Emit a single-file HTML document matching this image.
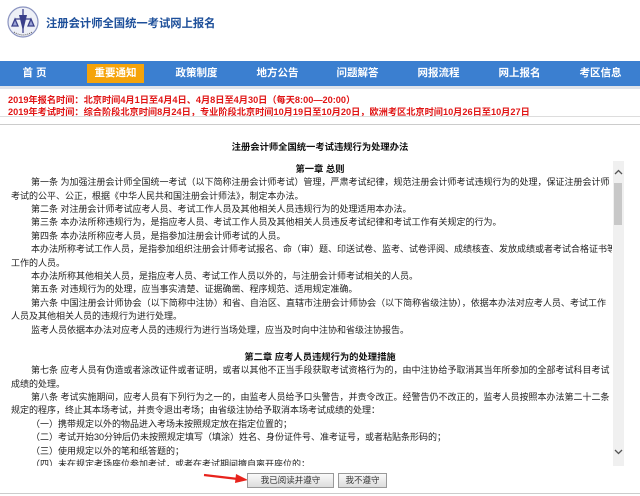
<!DOCTYPE html>
<html><head><meta charset="utf-8"><style>
*{margin:0;padding:0;box-sizing:border-box}
body{width:640px;height:496px;overflow:hidden;background:#fff;font-family:"Liberation Sans","Noto Sans CJK SC",sans-serif;position:relative}
.logo{position:absolute;left:6px;top:5px;width:34px;height:34px}
.site{position:absolute;left:46px;top:15px;font-size:11.3px;font-weight:bold;color:#1d4f9a}
.nav{position:absolute;left:0;top:61px;width:640px;height:25px;background:#3b7fd0}
.nav span{position:absolute;top:0;width:81px;text-align:center;line-height:25px;color:#fff;font-size:10.5px;font-weight:bold}
.hl{position:absolute;left:87px;top:64px;width:57px;height:19px;background:#f5a30a}
.gl{position:absolute;left:0;top:86px;width:640px;height:3px;background:#dfe3ea}
.red{position:absolute;left:8px;font-size:9.2px;font-weight:bold;color:#e01515;white-space:nowrap}
.sep{position:absolute;left:0;width:640px;height:1px;background:#ccc}
.title{position:absolute;left:0;width:640px;text-align:center;top:139px;font-size:9.3px;font-weight:bold;color:#111}
.box{position:absolute;left:0;top:161px;width:612px;height:305px;overflow:hidden}
.ln{position:absolute;left:11px;width:595px;font-size:9px;color:#222;white-space:nowrap;line-height:13px;height:13px}
.in{left:31px;width:575px}
.j{text-align:justify;text-align-last:justify}
.h{left:0;width:640px;text-align:center;font-weight:bold;color:#111;font-size:9.3px}
.sb{position:absolute;left:613px;top:161px;width:11px;height:305px;background:#f0f0f0}
.th{position:absolute;left:614px;top:183px;width:8px;height:42px;background:#c8c8c8}
.btn{position:absolute;top:473px;height:15px;border:1px solid #999;background:linear-gradient(#fafafa,#dcdcdc);font-size:8.5px;color:#333;text-align:center;line-height:13px}
</style></head><body>
<svg class="logo" viewBox="0 0 34 34"><circle cx="17" cy="17" r="15" fill="#eef0f7" stroke="#8a93c0" stroke-width="1.2"/><path d="M17 4 L17 28 M9 14 L25 14 M9 14 L6 21 L12 21 Z M25 14 L22 21 L28 21 Z" stroke="#3a3f8a" stroke-width="1.3" fill="#9aa3d6"/><path d="M13 10 L17 26 L21 10 Z" fill="#3a3f8a"/><path d="M8 27 Q17 33 26 27" stroke="#555" stroke-width="1" fill="none" stroke-dasharray="1 1"/></svg>
<div class="site">注册会计师全国统一考试网上报名</div>
<div class="nav">
<span style="left:-6px">首 页</span><span style="left:156px">政策制度</span><span style="left:237px">地方公告</span><span style="left:317px">问题解答</span><span style="left:398px">网报流程</span><span style="left:479px">网上报名</span><span style="left:560px">考区信息</span>
</div>
<div class="hl"></div>
<div class="nav" style="background:none"><span style="left:75px">重要通知</span></div>
<div class="gl"></div>
<div class="red" style="top:92px">2019年报名时间：北京时间4月1日至4月4日、4月8日至4月30日（每天8:00—20:00）</div>
<div class="red" style="top:104px">2019年考试时间：综合阶段北京时间8月24日，专业阶段北京时间10月19日至10月20日，欧洲考区北京时间10月26日至10月27日</div>
<div class="sep" style="top:116px;background:#ddd"></div>
<div class="sep" style="top:124px"></div>
<div class="title">注册会计师全国统一考试违规行为处理办法</div>
<div class="box">
<div class="ln h" style="top:2px">第一章 总则</div>
<div class="ln in j" style="top:15px">第一条 为加强注册会计师全国统一考试（以下简称注册会计师考试）管理，严肃考试纪律，规范注册会计师考试违规行为的处理，保证注册会计师</div>
<div class="ln" style="top:29px">考试的公平、公正，根据《中华人民共和国注册会计师法》，制定本办法。</div>
<div class="ln in" style="top:42px">第二条 对注册会计师考试应考人员、考试工作人员及其他相关人员违规行为的处理适用本办法。</div>
<div class="ln in" style="top:55px">第三条 本办法所称违规行为，是指应考人员、考试工作人员及其他相关人员违反考试纪律和考试工作有关规定的行为。</div>
<div class="ln in" style="top:69px">第四条 本办法所称应考人员，是指参加注册会计师考试的人员。</div>
<div class="ln in j" style="top:82px;width:582px">本办法所称考试工作人员，是指参加组织注册会计师考试报名、命（审）题、印送试卷、监考、试卷评阅、成绩核查、发放成绩或者考试合格证书等</div>
<div class="ln" style="top:96px">工作的人员。</div>
<div class="ln in" style="top:109px">本办法所称其他相关人员，是指应考人员、考试工作人员以外的，与注册会计师考试相关的人员。</div>
<div class="ln in" style="top:122px">第五条 对违规行为的处理，应当事实清楚、证据确凿、程序规范、适用规定准确。</div>
<div class="ln in j" style="top:136px">第六条 中国注册会计师协会（以下简称中注协）和省、自治区、直辖市注册会计师协会（以下简称省级注协），依据本办法对应考人员、考试工作</div>
<div class="ln" style="top:149px">人员及其他相关人员的违规行为进行处理。</div>
<div class="ln in" style="top:163px">监考人员依据本办法对应考人员的违规行为进行当场处理，应当及时向中注协和省级注协报告。</div>
<div class="ln h" style="top:190px">第二章 应考人员违规行为的处理措施</div>
<div class="ln in j" style="top:203px">第七条 应考人员有伪造或者涂改证件或者证明，或者以其他不正当手段获取考试资格行为的，由中注协给予取消其当年所参加的全部考试科目考试</div>
<div class="ln" style="top:217px">成绩的处理。</div>
<div class="ln in j" style="top:230px">第八条 考试实施期间，应考人员有下列行为之一的，由监考人员给予口头警告，并责令改正。经警告仍不改正的，监考人员按照本办法第二十二条</div>
<div class="ln" style="top:243px">规定的程序，终止其本场考试，并责令退出考场；由省级注协给予取消本场考试成绩的处理：</div>
<div class="ln in" style="top:257px">（一）携带规定以外的物品进入考场未按照规定放在指定位置的；</div>
<div class="ln in" style="top:270px">（二）考试开始30分钟后仍未按照规定填写（填涂）姓名、身份证件号、准考证号，或者粘贴条形码的；</div>
<div class="ln in" style="top:284px">（三）使用规定以外的笔和纸答题的；</div>
<div class="ln in" style="top:297px">（四）未在规定考场座位参加考试，或者在考试期间擅自离开座位的；</div>
</div>
<div class="sb"></div><div class="th"></div>
<svg style="position:absolute;left:613px;top:168px" width="11" height="8" viewBox="0 0 11 8"><path d="M2 6 L5.5 2.5 L9 6" stroke="#555" stroke-width="1.3" fill="none"/></svg>
<svg style="position:absolute;left:613px;top:448px" width="11" height="8" viewBox="0 0 11 8"><path d="M2 2 L5.5 5.5 L9 2" stroke="#555" stroke-width="1.3" fill="none"/></svg>
<svg style="position:absolute;left:200px;top:470px" width="50" height="14" viewBox="0 0 50 14"><path d="M4 5 L38 9" stroke="#e8231c" stroke-width="2.2"/><path d="M36 4 L48 10 L35 13 Z" fill="#e8231c"/></svg>
<div class="btn" style="left:247px;width:87px">我已阅读并遵守</div>
<div class="btn" style="left:338px;width:49px">我不遵守</div>
<div class="sep" style="top:493px;background:#ccc"></div>
</body></html>
